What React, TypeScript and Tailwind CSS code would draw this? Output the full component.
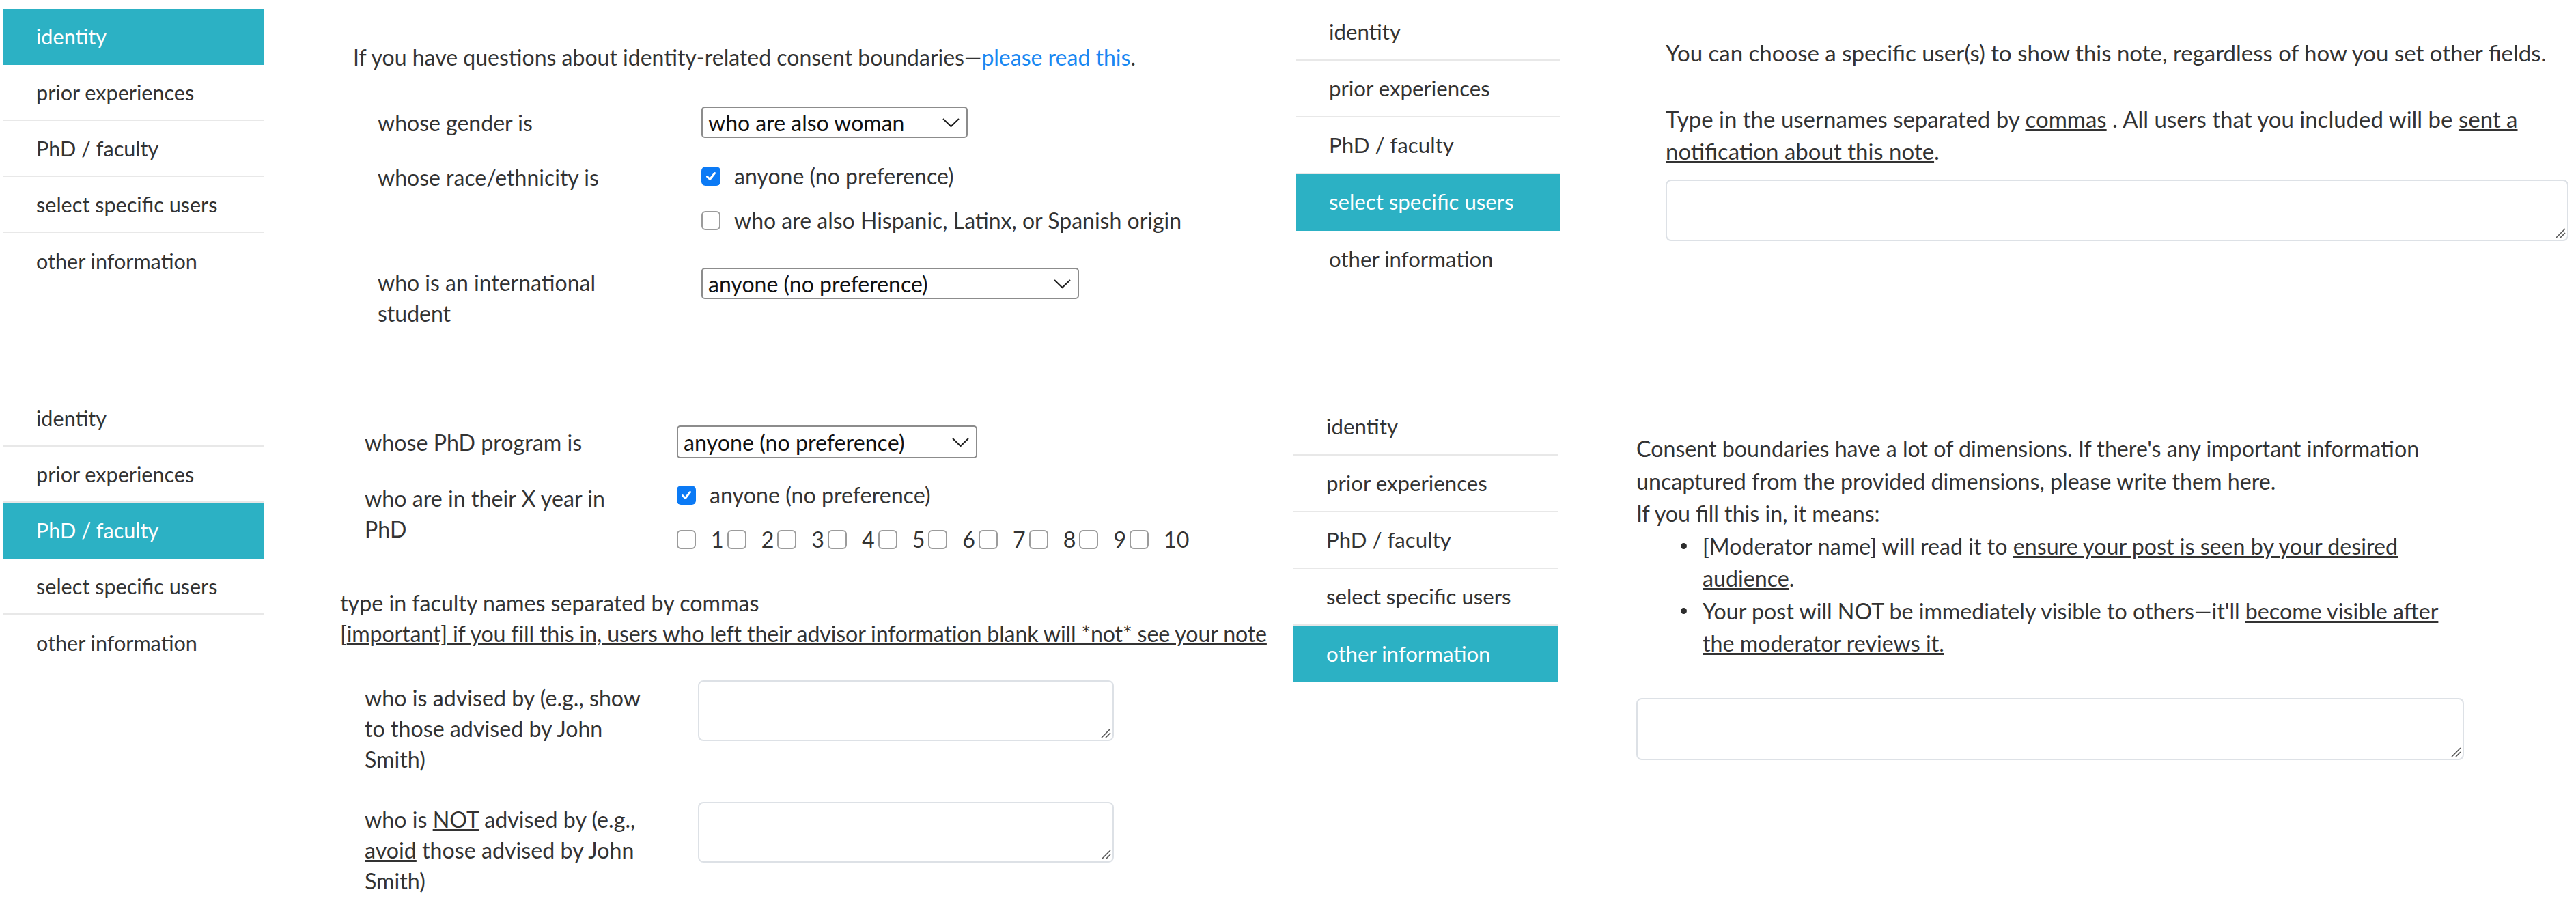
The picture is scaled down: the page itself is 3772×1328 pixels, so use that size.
import clsx from "clsx";
import type { ReactNode } from "react";

const sections = [
  "identity",
  "prior experiences",
  "PhD / faculty",
  "select specific users",
  "other information",
];

function Sidebar({ active, wide = false }: { active: number; wide?: boolean }) {
  return (
    <ul className={clsx("shrink-0", wide ? "w-[388px] text-[31.2px]" : "w-[381px] text-[30.6px]")}>
      {sections.map((label, i) => (
        <li
          key={label}
          className={clsx(
            "flex items-center whitespace-nowrap",
            wide ? "h-[83px] pl-[49px]" : "h-[82px] pl-[48px]",
            i < sections.length - 1 && "border-b-2",
            i === active
              ? "border-[#2cb1c4] bg-[#2cb1c4] text-white"
              : "border-[#e8e8e8] text-[#333]"
          )}
        >
          {label}
        </li>
      ))}
    </ul>
  );
}

function Box({ checked = false }: { checked?: boolean }) {
  if (checked) {
    return (
      <span className="flex h-[28px] w-[28px] shrink-0 items-center justify-center rounded-[6px] bg-[#0b7af5]">
        <svg width="18" height="18" viewBox="0 0 18 18">
          <path
            d="M3.5 9.5 L7.5 13.5 L14.5 4.5"
            stroke="white"
            strokeWidth="3"
            fill="none"
            strokeLinecap="round"
            strokeLinejoin="round"
          />
        </svg>
      </span>
    );
  }
  return <span className="h-[28px] w-[28px] shrink-0 rounded-[6px] border-2 border-[#9b9b9b] bg-white" />;
}

function Option({ checked = false, children }: { checked?: boolean; children: ReactNode }) {
  return (
    <label className="flex items-center gap-[20px]">
      <Box checked={checked} />
      <span>{children}</span>
    </label>
  );
}

function Select({ value, className }: { value: string; className: string }) {
  return (
    <div
      className={clsx(
        "flex shrink-0 items-center justify-between rounded-[5px] border-2 border-[#8c8c8c] bg-white pl-[8px] pr-[9px] text-[#111]",
        className
      )}
    >
      <span>{value}</span>
      <svg width="27" height="15" viewBox="0 0 27 15">
        <polyline points="2,2 13.5,13 25,2" stroke="#1f1f1f" strokeWidth="2" fill="none" />
      </svg>
    </div>
  );
}

// textarea with a drawn resize grip in the corner
function Note({ className }: { className: string }) {
  return (
    <div className={clsx("relative shrink-0", className)}>
      <textarea className="block h-full w-full resize-none rounded-[8px] border-2 border-[#dde1e6] bg-white outline-none" />
      <svg className="absolute bottom-[4px] right-[4px]" width="18" height="18" viewBox="0 0 18 18">
        <path d="M17 4 L4 17 M17 10 L10 17" stroke="#555" strokeWidth="1.6" fill="none" />
      </svg>
    </div>
  );
}

export default function App() {
  return (
    <div className="grid h-[1328px] w-[3772px] grid-cols-[1890px_1882px] grid-rows-[570px_758px] overflow-hidden bg-white text-[#333] [font-family:Lato,'Liberation_Sans',sans-serif]">
      {/* identity */}
      <section className="flex items-start pl-[5px] pt-[13px] leading-[45px]">
        <Sidebar active={0} />
        <div className="ml-[131px] mt-[48px] whitespace-nowrap text-[32px]">
          <p>
            If you have questions about identity-related consent boundaries—
            <a className="text-[#1a88f2]">please read this</a>.
          </p>
          <div className="mt-[50px] flex items-center pl-[36px]">
            <span className="w-[474px]">whose gender is</span>
            <Select value="who are also woman" className="h-[46px] w-[390px]" />
          </div>
          <div className="mt-[33px] flex items-start pl-[36px]">
            <span className="w-[474px] pt-[2px]">whose race/ethnicity is</span>
            <div className="flex flex-col gap-[20px]">
              <Option checked>anyone (no preference)</Option>
              <Option>who are also Hispanic, Latinx, or Spanish origin</Option>
            </div>
          </div>
          <div className="mt-[46px] flex items-start pl-[36px]">
            <span className="w-[474px]">
              who is an international
              <br />
              student
            </span>
            <Select value="anyone (no preference)" className="mt-[1px] h-[46px] w-[553px]" />
          </div>
        </div>
      </section>

      {/* select specific users */}
      <section className="flex items-start pl-[7px] pt-[6px] leading-[47.5px]">
        <Sidebar active={3} wide />
        <div className="ml-[154px] mt-[48px] whitespace-nowrap text-[33px]">
          <p>You can choose a specific user(s) to show this note, regardless of how you set other fields.</p>
          <p className="mt-[49px]">
            Type in the usernames separated by <u>commas</u> . All users that you included will be <u>sent a</u>
            <br />
            <u>notification about this note</u>.
          </p>
          <Note className="mt-[17px] h-[90px] w-[1322px]" />
        </div>
      </section>

      {/* PhD / faculty */}
      <section className="flex items-start pl-[5px] pt-[2px] leading-[45px]">
        <Sidebar active={2} />
        <div className="ml-[112px] mt-[51px] whitespace-nowrap text-[32.2px]">
          <div className="flex items-center pl-[36px]">
            <span className="w-[457px]">whose PhD program is</span>
            <Select value="anyone (no preference)" className="h-[48px] w-[440px]" />
          </div>
          <div className="mt-[31px] flex items-start pl-[36px]">
            <span className="mt-[5px] w-[457px]">
              who are in their X year in
              <br />
              PhD
            </span>
            <div>
              <Option checked>anyone (no preference)</Option>
              <div className="mt-[20px] flex items-center">
                {[1, 2, 3, 4, 5, 6, 7, 8, 9, 10].map((n) => (
                  <span key={n} className={clsx("flex items-center", n > 1 && "ml-[5px]")}>
                    <Box />
                    <span className="ml-[22px]">{n}</span>
                  </span>
                ))}
              </div>
            </div>
          </div>
          <p className="mt-[48px]">
            type in faculty names separated by commas
            <br />
            <span className="tracking-[-0.16px]">
              [
              <u>important] if you fill this in, users who left their advisor information blank will *not* see your note</u>
            </span>
          </p>
          <div className="mt-[46px] flex items-start pl-[36px]">
            <span className="mt-[3px] w-[488px]">
              who is advised by (e.g., show
              <br />
              to those advised by John
              <br />
              Smith)
            </span>
            <Note className="h-[89px] w-[609px]" />
          </div>
          <div className="mt-[40px] flex items-start pl-[36px]">
            <span className="mt-[3px] w-[488px]">
              who is <u>NOT</u> advised by (e.g.,
              <br />
              <u>avoid</u> those advised by John
              <br />
              Smith)
            </span>
            <Note className="h-[89px] w-[609px]" />
          </div>
        </div>
      </section>

      {/* other information */}
      <section className="flex items-start pl-[3px] pt-[14px] leading-[47.5px]">
        <Sidebar active={4} wide />
        <div className="ml-[115px] mt-[49px] whitespace-nowrap text-[32.2px]">
          <p>
            Consent boundaries have a lot of dimensions. If there's any important information
            <br />
            uncaptured from the provided dimensions, please write them here.
            <br />
            If you fill this in, it means:
          </p>
          <ul className="pl-[64px]">
            <li className="flex">
              <span className="w-[33px] shrink-0 pt-[19px] pl-[1px]">
                <span className="block h-[9px] w-[9px] rounded-full bg-[#2d2d2d]" />
              </span>
              <span>
                [Moderator name] will read it to <u>ensure your post is seen by your desired</u>
                <br />
                <u>audience</u>.
              </span>
            </li>
            <li className="flex">
              <span className="w-[33px] shrink-0 pt-[19px] pl-[1px]">
                <span className="block h-[9px] w-[9px] rounded-full bg-[#2d2d2d]" />
              </span>
              <span>
                Your post will NOT be immediately visible to others—it'll <u>become visible after</u>
                <br />
                <u>the moderator reviews it.</u>
              </span>
            </li>
          </ul>
          <Note className="mt-[56px] h-[91px] w-[1212px]" />
        </div>
      </section>
    </div>
  );
}
